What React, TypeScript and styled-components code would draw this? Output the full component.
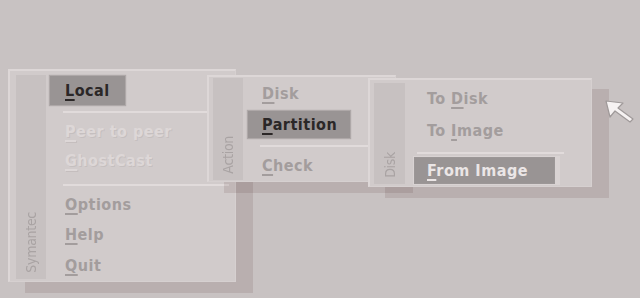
import React from "react";
import styled, { createGlobalStyle } from "styled-components";

const Global = createGlobalStyle`
  html, body { margin: 0; padding: 0; background: #c8c2c2; }
  #root { width: 640px; height: 298px; }
`;

const Desktop = styled.div`
  position: relative;
  width: 640px;
  height: 298px;
  overflow: hidden;
  background: #c8c2c2;
  font-family: "DejaVu Sans Condensed", "DejaVu Sans", sans-serif;
  font-stretch: condensed;
`;

const Menu = styled.div<{ $x: number; $y: number; $w: number; $h: number; $pt: number; $pl: number }>`
  position: absolute;
  left: ${(p) => p.$x}px;
  top: ${(p) => p.$y}px;
  width: ${(p) => p.$w}px;
  height: ${(p) => p.$h}px;
  box-sizing: border-box;
  display: flex;
  padding: ${(p) => p.$pt}px 0 0 ${(p) => p.$pl}px;
  background: #d1cbcb;
  border-top: 2px solid #ddd7d7;
  border-left: 2px solid #ddd7d7;
  border-right: 1px solid #d6d0d0;
  border-bottom: 1px solid #d6d0d0;
  box-shadow: 17px 11px 0 0 rgba(60, 30, 30, 0.11);
`;

const Sidebar = styled.div<{ $w: number; $h: number }>`
  flex: none;
  width: ${(p) => p.$w}px;
  height: ${(p) => p.$h}px;
  background: #c7c1c1;
  display: flex;
  flex-direction: column;
  justify-content: flex-end;
  align-items: center;
  padding-bottom: 6px;
  box-sizing: border-box;
`;

const SideLabel = styled.span`
  writing-mode: vertical-rl;
  transform: rotate(180deg);
  font-size: 14px;
  letter-spacing: -0.3px;
  color: #a9a3a3;
  line-height: 1;
`;

const Items = styled.div<{ $gap: number }>`
  flex: 1;
  display: flex;
  flex-direction: column;
  padding-left: ${(p) => p.$gap}px;
`;

const Row = styled.div<{ $h: number }>`
  height: ${(p) => p.$h}px;
  display: flex;
  align-items: center;
`;

type Kind = "normal" | "disabled" | "active" | "activeLight";

const Label = styled.span<{ $kind: Kind; $pad: number; $w?: number; $bh: number }>`
  display: inline-flex;
  align-items: center;
  height: ${(p) => p.$bh}px;
  box-sizing: border-box;
  padding: 0 0 0 ${(p) => p.$pad}px;
  ${(p) => (p.$w ? `width: ${p.$w}px;` : "padding-right: 15px;")}
  font-size: 16px;
  font-weight: bold;
  letter-spacing: 0.5px;
  white-space: pre;
  color: ${(p) =>
    p.$kind === "disabled"
      ? "#ddd7d7"
      : p.$kind === "active"
      ? "#2b2727"
      : p.$kind === "activeLight"
      ? "#ebe6e6"
      : "#a39d9d"};
  background: ${(p) => (p.$kind === "active" || p.$kind === "activeLight" ? "#999494" : "transparent")};
  box-shadow: ${(p) =>
    p.$kind === "active"
      ? "0 0 1px 1px rgba(150,145,145,0.6)"
      : p.$kind === "activeLight"
      ? "0 0 0 1px #9c9797, 4px 0 0 2px #d9d3d3, 0 0 0 2px #d9d3d3"
      : "none"};
  text-shadow: ${(p) => (p.$kind === "disabled" ? "1px 1px 0 rgba(150,140,140,0.2)" : "none")};
`;

const Text = styled.span`
  u {
    text-decoration-thickness: 1.5px;
    text-underline-offset: 3px;
  }
`;

const Separator = styled.div<{ $mt: number; $mb: number; $ml: number; $mr: number }>`
  height: 2px;
  background: #e1dbdb;
  margin: ${(p) => p.$mt}px ${(p) => p.$mr}px ${(p) => p.$mb}px ${(p) => p.$ml}px;
  flex: none;
`;

const Cursor = styled.svg`
  position: absolute;
  left: 603px;
  top: 98px;
`;

type Entry =
  | { sep: true; mt: number; mb: number; ml: number; mr: number }
  | { sep?: false; pre?: string; key: string; rest: string; kind: Kind; h: number; bh?: number; w?: number };

const M = (pre: string, key: string, rest: string, kind: Kind, h: number, bh?: number, w?: number): Entry => ({
  pre,
  key,
  rest,
  kind,
  h,
  bh,
  w,
});
const S = (mt: number, mb: number, ml: number, mr: number): Entry => ({ sep: true, mt, mb, ml, mr });

interface MenuDef {
  title: string;
  x: number;
  y: number;
  w: number;
  h: number;
  pt: number;
  pl: number;
  sw: number;
  sh: number;
  gap: number;
  pad: number;
  entries: Entry[];
}

const menus: MenuDef[] = [
  {
    title: "Symantec",
    x: 8,
    y: 69,
    w: 228,
    h: 213,
    pt: 4,
    pl: 6,
    sw: 30,
    sh: 204,
    gap: 4,
    pad: 15,
    entries: [
      M("", "L", "ocal", "active", 30, 29),
      S(6, 4, 13, 6),
      M("", "P", "eer to peer", "disabled", 28),
      M("", "G", "hostCast", "disabled", 30),
      S(9, 3, 13, 6),
      M("", "O", "ptions", "normal", 30),
      M("", "H", "elp", "normal", 31),
      M("", "Q", "uit", "normal", 30),
    ],
  },
  {
    title: "Action",
    x: 207,
    y: 75,
    w: 189,
    h: 107,
    pt: 1,
    pl: 4,
    sw: 30,
    sh: 102,
    gap: 5,
    pad: 14,
    entries: [
      M("", "D", "isk", "normal", 31),
      M("", "P", "artition", "active", 31, 27, 102),
      S(5, 3, 12, 10),
      M("", "C", "heck", "normal", 30),
    ],
  },
  {
    title: "Disk",
    x: 368,
    y: 78,
    w: 224,
    h: 109,
    pt: 3,
    pl: 4,
    sw: 31,
    sh: 101,
    gap: 10,
    pad: 12,
    entries: [
      M("To ", "D", "isk", "normal", 31),
      M("To ", "I", "mage", "normal", 32),
      S(6, 3, 2, 27),
      M("", "F", "rom Image", "activeLight", 27, 25, 139),
    ],
  },
];

export default function App() {
  return (
    <Desktop>
      <Global />
      {menus.map((m) => (
        <Menu key={m.title} $x={m.x} $y={m.y} $w={m.w} $h={m.h} $pt={m.pt} $pl={m.pl}>
          <Sidebar $w={m.sw} $h={m.sh}>
            <SideLabel>{m.title}</SideLabel>
          </Sidebar>
          <Items $gap={m.gap}>
            {m.entries.map((e, i) =>
              e.sep ? (
                <Separator key={i} $mt={e.mt} $mb={e.mb} $ml={e.ml} $mr={e.mr} />
              ) : (
                <Row key={i} $h={e.h}>
                  <Label $kind={e.kind} $pad={m.pad} $w={e.w} $bh={e.bh ?? e.h}>
                    <Text>
                      {e.pre}
                      <u>{e.key}</u>
                      {e.rest}
                    </Text>
                  </Label>
                </Row>
              )
            )}
          </Items>
        </Menu>
      ))}
      <Cursor width="34" height="26" viewBox="0 0 34 26">
        <polygon
          points="3,3 20,5 15,10 30,21 27,24 12,13 7,19"
          fill="#f6f2f2"
          stroke="#9f9999"
          strokeWidth="1.2"
          strokeLinejoin="round"
        />
      </Cursor>
    </Desktop>
  );
}
